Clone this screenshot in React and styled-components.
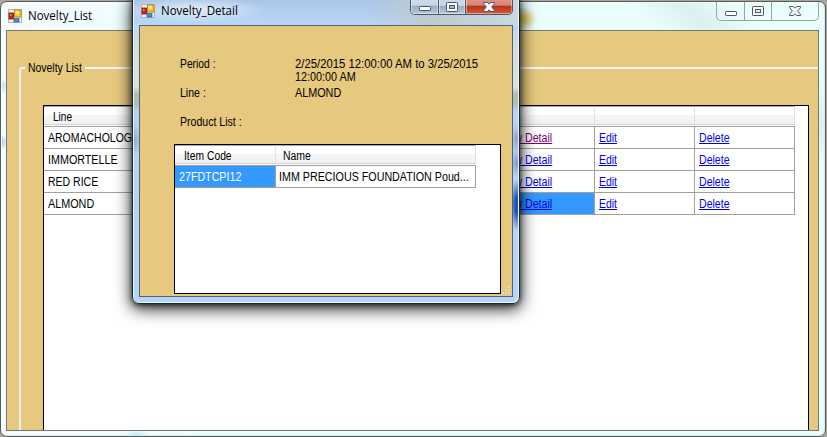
import React from "react";
import styled, { createGlobalStyle, css } from "styled-components";

const Global = createGlobalStyle`
  body { margin: 0; overflow: hidden; }
  * { box-sizing: border-box; }
`;

const Desktop = styled.div`
  position: relative;
  width: 827px;
  height: 437px;
  overflow: hidden;
  padding-top: 1px;
  background: #a9a69b;
  font: 12px/14px "Liberation Sans", Arial, sans-serif;
  color: #000;
`;

const listGlass = css`
  background:
    radial-gradient(ellipse 15px 12px at 521px 17px, #e0d070 30%, rgba(230, 212, 92, 0) 100%),
    radial-gradient(ellipse 5px 8px at 1px 84px, #b9d6f6, rgba(185, 214, 246, 0)),
    radial-gradient(ellipse 5px 8px at 1px 140px, #a8c8ee, rgba(168, 200, 238, 0)),
    radial-gradient(ellipse 12px 7px at 136px 435px, #a8e2fa, rgba(168, 226, 250, 0)),
    linear-gradient(40deg, rgba(255,255,255,0) 85%, rgba(205, 226, 226, .5) 89%, rgba(255,255,255,0) 93%),
    linear-gradient(90deg, #f6fbfc, #ebfefe 25%, #ebfefe);
`;
const detailGlass = css`
  background:
    radial-gradient(ellipse 7px 16px at 1px 145px, #8ba7cd, rgba(139,167,205,0)),
    radial-gradient(ellipse 7px 26px at 384px 210px, #1d58b0 30%, rgba(29,88,176,0)),
    radial-gradient(ellipse 7px 14px at 384px 144px, #999bcb, rgba(153,155,203,0)),
    radial-gradient(ellipse 7px 14px at 384px 168px, #8299d8, rgba(130,153,216,0)),
    radial-gradient(ellipse 75px 13px at 62px 15px, #e2edf8, rgba(226,237,248,0)),
    linear-gradient(90deg, rgba(191,208,214,0) 60%, #bccbd0 76%, #c8d9e0 100%) 0 0 / 100% 32px no-repeat,
    linear-gradient(180deg, #a6c2e2 0, #b9d6f8 28px, #d3dede 50px, #d8e2e0 92px, #b0bdb4 99px, #b0bdb4 108px, #b5d3f5 116px, #b5d5f8 100%);
`;

const WindowFrame = styled.section`
  display: flex;
  flex-direction: column;
  overflow: hidden;
`;
const ListWindow = styled(WindowFrame)`
  width: 826px;
  height: 436px;
  padding: 0 6px 5px 5px;
  border: 1px solid #565c5c;
  border-radius: 7px;
  box-shadow: inset 1px 1px #fafffe, inset -1px -1px #d9ecec;
  ${listGlass}
`;
const DetailWindow = styled(WindowFrame)`
  position: absolute;
  left: 132px;
  top: -6px;
  width: 388px;
  height: 310px;
  padding: 5px 6px 6px;
  border: 1px solid #1e252c;
  border-radius: 7px;
  box-shadow: inset 1px 1px #e2f6ff, inset -1px -1px #e2f6ff,
    0 4px 16px 1px rgba(0, 0, 0, .85), 0 1px 5px rgba(0, 0, 0, .6);
  ${detailGlass}
`;

const TitleBar = styled.header`
  position: relative;
  display: flex;
  flex: none;
  height: ${p => (p.$front ? 25 : 28)}px;
  padding: ${p => (p.$front ? "4px 0 0 2px" : "7px 0 0 2px")};
`;
const Title = styled.h1`
  margin: -2px 0 0 6px;
  font: 400 12px/17px "Open Sans", "Noto Sans", sans-serif;
  white-space: nowrap;
  transform: scaleX(${p => p.$fit});
  transform-origin: left;
`;
const Caption = styled.div`
  display: flex;
  position: absolute;
  right: 0;
  top: ${p => (p.$front ? -5 : 0)}px;
  height: ${p => (p.$front ? 20 : 19)}px;
  border: 1px solid ${p => (p.$front ? "#4a5665" : "#95a6a6")};
  border-top: 0;
  border-radius: 0 0 5px 5px;
  overflow: hidden;
`;
const CaptionButton = styled.span`
  display: flex;
  align-items: center;
  justify-content: center;
  width: ${p => p.$w}px;
  padding-top: ${p => (p.$front ? 4 : 0)}px;
  border-right: ${p => (p.$last ? "0" : p.$front ? "1px solid #4c5a6c" : "1px solid #95a6a6")};
  ${p => p.$front && css`
    background: ${p.$last
      ? "linear-gradient(#dca195 0, #d88476 54%, #b9301a 58%, #d65a36 100%)"
      : "linear-gradient(#cfdcec 0, #c8d6e6 54%, #99adc5 58%, #b3c8df 100%)"};
    box-shadow: inset 1px -1px rgba(255,255,255,.45), inset -1px 0 rgba(255,255,255,.35);
  `}
`;
const MinimizeIcon = styled.svg`
  margin-top: ${p => (p.$front ? 3 : 5)}px;
`;

const Client = styled.main`
  flex: 1;
  min-height: 0;
  overflow: hidden;
  border: 1px solid ${p => (p.$front ? "#4e6374" : "#70797a")};
  background: #e6c97f;
`;
const ListClient = styled(Client)`
  padding: 30px 0 0 12px;
`;
const DetailClient = styled(Client)`
  position: relative;
  padding: 31px 0 0 34px;
`;

const GroupBox = styled.fieldset`
  width: 850px;
  height: 420px;
  margin: 0;
  padding: 30px 0 0 22px;
  border: 2px solid #f5f7fa;
  border-left-color: #eef0f2;
  border-radius: 3px;
  min-width: 0;
`;
const Legend = styled.legend`
  width: 60px;
  height: 14px;
  margin-left: -18px;
  padding: 0 0 0 3px;
`;

const Text = styled.span`
  display: inline-block;
  white-space: nowrap;
  transform: scaleX(${p => p.$fit || 0.88});
  transform-origin: left;
`;
const Link = styled(Text)`
  color: ${p => (p.$visited ? "#800080" : "#0000f0")};
  text-decoration: underline;
  text-decoration-thickness: 1px;
  text-underline-offset: 1px;
`;

const Grid = styled.div`
  border: 1px solid #000;
  background: #fff;
  overflow: hidden;
`;
const ListGrid = styled(Grid)`
  width: 766px;
  height: 400px;
`;
const DetailGrid = styled(Grid)`
  width: 327px;
  height: 150px;
`;
const GridRow = styled.div`
  display: grid;
  width: max-content;
  grid-template-columns: ${p => p.$cols};
`;
const HeaderRow = styled(GridRow)`
  height: 21px;
  border-bottom: 1px solid #a0a0a0;
`;
const HeaderCell = styled.div`
  height: 19px;
  padding: 3px 0 0 ${p => p.$pad || 9}px;
  border-top: 1px solid #a6a8aa;
  border-right: 1px solid #dfe1e3;
  border-bottom: 1px solid #d2d4d6;
  background: linear-gradient(#fff 0 45%, #f5f6f8 46%, #f0f1f3);
`;
const Cell = styled.div`
  height: 22px;
  padding: 4px 0 0 ${p => p.$pad || 4}px;
  border-right: 1px solid #a0a0a0;
  border-bottom: 1px solid #a0a0a0;
  overflow: hidden;
  color: ${p => (p.$selected ? "#fff" : "#000")};
  background: ${p => (p.$selected ? "#3399ff" : "#fff")};
`;

const Fields = styled.dl`
  display: grid;
  grid-template-columns: 115px 210px;
  grid-template-rows: 29px 29px 29px;
  margin: 0 0 0 6px;
`;
const Label = styled.dt``;
const Value = styled.dd`
  display: flex;
  flex-direction: column;
  align-items: flex-start;
  margin: 0;
  padding-top: 1px;
  line-height: 13px;
`;
const GripIcon = styled.svg`
  position: absolute;
  right: 1px;
  bottom: 1px;
`;

function AppIcon() {
  return (
    <svg width="14" height="14" viewBox="0 0 14 14">
      <rect x=".5" y=".5" width="13" height="13" fill="#f1f0ed" stroke="#b8b5b0" />
      <rect x="1" y="4" width="4.5" height="6" fill="#bd2b20" stroke="#8b1510" strokeWidth=".8" />
      <rect x="2" y="5" width="1.5" height="2" fill="#e98b7e" />
      <rect x="6.5" y="1" width="6.5" height="7" fill="#f7c62f" stroke="#b98008" strokeWidth=".9" />
      <rect x="7.3" y="1.8" width="3.5" height="3" fill="#ffe98d" />
      <rect x="6" y="9.5" width="5" height="3.5" fill="#4d86e0" stroke="#2858b0" strokeWidth=".7" />
    </svg>
  );
}

function CaptionButtons({ front }) {
  const line = "#4d5468";
  return (
    <Caption $front={front}>
      <CaptionButton $front={front} $w={28}>
        <MinimizeIcon $front={front} width="12" height="5">
          <rect x=".5" y=".5" width="11" height="4" rx=".7" fill="#fff" stroke={line} />
        </MinimizeIcon>
      </CaptionButton>
      <CaptionButton $front={front} $w={27}>
        <svg width="12" height="10">
          <rect x=".5" y=".5" width="11" height="9" rx=".7" fill="#f8fafa" stroke={line} />
          <rect x="3.5" y="3.5" width="5" height="3" fill={front ? "#a8bad0" : "#e6f4f4"} stroke={line} />
        </svg>
      </CaptionButton>
      <CaptionButton $front={front} $w={46} $last>
        <svg width="12" height="10" viewBox="0 0 12 10">
          <path
            d="M.6.5H4.4L6 2.2 7.6.5h3.8v1.3L8.7 5l2.7 3.2v1.3H7.6L6 7.8 4.4 9.5H.6V8.2L3.3 5 .6 1.8z"
            fill="#fafafa" stroke={line} strokeLinejoin="round"
          />
        </svg>
      </CaptionButton>
    </Caption>
  );
}

const listCols = "151px 100px 100px 100px 100px 100px 100px";
const listRows = [
  { name: "AROMACHOLOGIE", fit: 0.875, visited: true },
  { name: "IMMORTELLE", fit: 0.895 },
  { name: "RED RICE", fit: 0.875 },
  { name: "ALMOND", fit: 0.9, selected: true },
];

export default function App() {
  return (
    <Desktop>
      <Global />
      <ListWindow>
        <TitleBar>
          <AppIcon />
          <Title $fit={0.96}>Novelty_List</Title>
          <CaptionButtons />
        </TitleBar>
        <ListClient>
          <GroupBox>
            <Legend><Text $fit={0.87}>Novelty List</Text></Legend>
            <ListGrid>
              <HeaderRow $cols={listCols}>
                <HeaderCell><Text $fit={0.84}>Line</Text></HeaderCell>
                {[1, 2, 3, 4, 5, 6].map(i => <HeaderCell key={i} />)}
              </HeaderRow>
              {listRows.map(r => (
                <GridRow key={r.name} $cols={listCols}>
                  <Cell><Text $fit={r.fit}>{r.name}</Text></Cell>
                  <Cell />
                  <Cell />
                  <Cell />
                  <Cell $selected={r.selected}><Link $visited={r.visited} $fit={0.89}>View Detail</Link></Cell>
                  <Cell><Link $fit={0.87}>Edit</Link></Cell>
                  <Cell><Link>Delete</Link></Cell>
                </GridRow>
              ))}
            </ListGrid>
          </GroupBox>
        </ListClient>
      </ListWindow>

      <DetailWindow>
        <TitleBar $front>
          <AppIcon />
          <Title $fit={0.96}>Novelty_Detail</Title>
          <CaptionButtons front />
        </TitleBar>
        <DetailClient $front>
          <Fields>
            <Label><Text $fit={0.86}>Period :</Text></Label>
            <Value>
              <Text $fit={0.943}>2/25/2015 12:00:00 AM to 3/25/2015</Text>
              <Text $fit={0.9}>12:00:00 AM</Text>
            </Value>
            <Label><Text $fit={0.88}>Line :</Text></Label>
            <Value><Text $fit={0.9}>ALMOND</Text></Value>
            <Label><Text>Product List :</Text></Label>
          </Fields>
          <DetailGrid>
            <HeaderRow $cols="101px 200px">
              <HeaderCell><Text $fit={0.86}>Item Code</Text></HeaderCell>
              <HeaderCell $pad={7}><Text $fit={0.87}>Name</Text></HeaderCell>
            </HeaderRow>
            <GridRow $cols="101px 200px">
              <Cell $selected><Text $fit={0.89}>27FDTCPI12</Text></Cell>
              <Cell $pad={3}><Text $fit={0.893}>IMM PRECIOUS FOUNDATION Poud...</Text></Cell>
            </GridRow>
          </DetailGrid>
          <GripIcon width="9" height="9" fill="#f7f3ea" stroke="#b9a878" strokeWidth=".3">
            <rect x="6" y="0" width="2" height="2" />
            <rect x="3" y="3" width="2" height="2" />
            <rect x="6" y="3" width="2" height="2" />
            <rect x="0" y="6" width="2" height="2" />
            <rect x="3" y="6" width="2" height="2" />
            <rect x="6" y="6" width="2" height="2" />
          </GripIcon>
        </DetailClient>
      </DetailWindow>
    </Desktop>
  );
}
